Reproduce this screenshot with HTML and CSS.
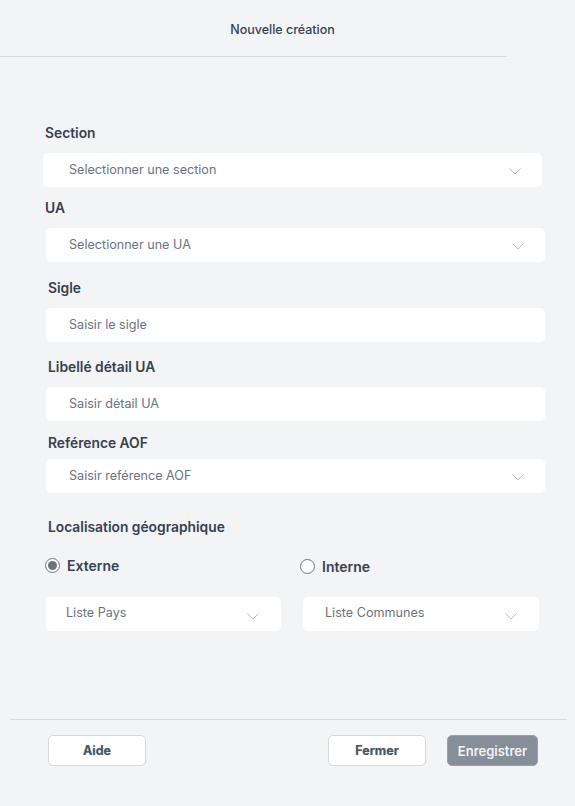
FILE: index.html
```html
<!DOCTYPE html>
<html lang="fr">
<head>
<meta charset="utf-8">
<title>Nouvelle création</title>
<link rel="stylesheet" href="styles.css">
</head>
<body>
<div class="modal">
  <header class="modal-header">
    <h1 class="modal-title">Nouvelle création</h1>
  </header>

  <form class="form">
    <div class="group group-section">
      <label class="label">Section</label>
      <div class="field field-shift">
        <span class="placeholder">Selectionner une section</span>
        <svg class="chevron" viewBox="0 0 12 7" width="12" height="7"><path d="M0.5 0.5 L6 6 L11.5 0.5" fill="none" stroke="#b4bac6" stroke-width="1"/></svg>
      </div>
    </div>

    <div class="group group-ua">
      <label class="label">UA</label>
      <div class="field">
        <span class="placeholder">Selectionner une UA</span>
        <svg class="chevron" viewBox="0 0 12 7" width="12" height="7"><path d="M0.5 0.5 L6 6 L11.5 0.5" fill="none" stroke="#b4bac6" stroke-width="1"/></svg>
      </div>
    </div>

    <div class="group group-sigle">
      <label class="label label-in">Sigle</label>
      <div class="field">
        <span class="placeholder">Saisir le sigle</span>
      </div>
    </div>

    <div class="group group-libelle">
      <label class="label label-in">Libellé détail UA</label>
      <div class="field">
        <span class="placeholder">Saisir détail UA</span>
      </div>
    </div>

    <div class="group group-ref">
      <label class="label label-in">Reférence AOF</label>
      <div class="field">
        <span class="placeholder">Saisir reférence AOF</span>
        <svg class="chevron" viewBox="0 0 12 7" width="12" height="7"><path d="M0.5 0.5 L6 6 L11.5 0.5" fill="none" stroke="#b4bac6" stroke-width="1"/></svg>
      </div>
    </div>

    <div class="group group-loc">
      <label class="label label-in">Localisation géographique</label>
      <div class="radios">
        <div class="radio-item">
          <span class="radio radio-checked"><span class="radio-dot"></span></span>
          <span class="radio-label">Externe</span>
        </div>
        <div class="radio-item radio-item-right">
          <span class="radio"></span>
          <span class="radio-label">Interne</span>
        </div>
      </div>
      <div class="lists">
        <div class="field field-half">
          <span class="placeholder placeholder-list">Liste Pays</span>
          <svg class="chevron chevron-low" viewBox="0 0 12 7" width="12" height="7"><path d="M0.5 0.5 L6 6 L11.5 0.5" fill="none" stroke="#b4bac6" stroke-width="1"/></svg>
        </div>
        <div class="field field-half field-communes">
          <span class="placeholder placeholder-list">Liste Communes</span>
          <svg class="chevron chevron-low" viewBox="0 0 12 7" width="12" height="7"><path d="M0.5 0.5 L6 6 L11.5 0.5" fill="none" stroke="#b4bac6" stroke-width="1"/></svg>
        </div>
      </div>
    </div>
  </form>

  <footer class="modal-footer">
    <button class="btn btn-light" type="button">Aide</button>
    <div class="footer-right">
      <button class="btn btn-light" type="button">Fermer</button>
      <button class="btn btn-primary" type="button">Enregistrer</button>
    </div>
  </footer>
</div>
</body>
</html>
```

FILE: styles.css
```css
* { box-sizing: border-box; }

html, body {
  margin: 0;
  padding: 0;
  background: #f3f4f6;
  font-family: Inter, "Noto Sans", "Liberation Sans", sans-serif;
  color: #374151;
}

.modal {
  width: 575px;
  height: 806px;
  display: flex;
  flex-direction: column;
}

.modal-header {
  width: 507px;
  height: 57px;
  border-bottom: 1px solid #d8dadf;
  display: flex;
  justify-content: center;
  padding-top: 22px;
  padding-left: 58px;
}

.modal-title {
  margin: 0;
  font-size: 12.5px;
  line-height: 16px;
  font-weight: 500;
  color: #374151;
}

.form {
  display: flex;
  flex-direction: column;
  padding-left: 45px;
  padding-right: 30px;
  height: 662px;
}

.group {
  display: flex;
  flex-direction: column;
}

.group-section { margin-top: 66px; }
.group-ua { margin-top: 11px; }
.group-sigle { margin-top: 16px; }
.group-libelle { margin-top: 15px; }
.group-ref { margin-top: 12px; }
.group-loc { margin-top: 24px; }

.label {
  font-size: 13.8px;
  line-height: 20px;
  font-weight: 600;
  color: #374151;
  margin-bottom: 10px;
}

.label-in { padding-left: 3px; }
.group-ref .label { margin-bottom: 6px; }

.field {
  width: 499px;
  height: 34px;
  margin-left: 1px;
  background: #ffffff;
  border-radius: 5px;
  display: flex;
  align-items: center;
  justify-content: space-between;
  padding-left: 23px;
  padding-right: 21px;
}

.field-shift {
  margin-left: -2px;
  padding-left: 26px;
}

.placeholder {
  font-size: 12.6px;
  color: #6b7280;
  line-height: 16px;
}

.chevron {
  display: block;
  flex: none;
  margin-top: 2px;
}

.chevron-low { margin-top: 8px; }

.radios {
  display: flex;
  margin-top: 8px;
  height: 20px;
  align-items: center;
}

.radio-item {
  display: flex;
  align-items: center;
  gap: 7px;
  width: 255px;
}

.radio-item-right {
  margin-top: 3px;
  width: auto;
}

.radio {
  width: 15px;
  height: 15px;
  border: 1px solid #6b7280;
  border-radius: 50%;
  background: #ffffff;
  display: flex;
  align-items: center;
  justify-content: center;
}

.radio-checked {
  border-color: #6b7280;
}

.radio-dot {
  width: 9px;
  height: 9px;
  border-radius: 50%;
  background: #6b7280;
}

.radio-label {
  font-size: 14px;
  font-weight: 600;
  color: #374151;
}

.lists {
  display: flex;
  margin-top: 22px;
  gap: 21px;
}

.field-half {
  width: 235px;
  padding-left: 20px;
  padding-right: 22px;
  align-items: flex-start;
  padding-top: 8px;
}

.field-communes {
  width: 236px;
  padding-left: 22px;
}

.placeholder-list { font-size: 12.6px; }

.modal-footer {
  margin-left: 10px;
  width: 557px;
  border-top: 1px solid #d8dadf;
  display: flex;
  justify-content: space-between;
  padding: 15px 29px 0 38px;
  height: 87px;
}

.footer-right {
  display: flex;
  gap: 21px;
}

.btn {
  height: 31px;
  border-radius: 5px;
  font-family: Inter, "Noto Sans", "Liberation Sans", sans-serif;
  font-size: 12.5px;
  font-weight: 700;
  cursor: pointer;
  text-shadow: 0 0 1px rgba(55, 65, 81, 0.4);
}

.btn-light {
  width: 98px;
  background: #ffffff;
  border: 1px solid #d5d8dd;
  color: #4b5563;
}

.btn-primary {
  width: 91px;
  background: #868e9a;
  border: 1px solid #9aa1ab;
  color: #f3f4f6;
  font-weight: 600;
  font-size: 13px;
  text-shadow: none;
}
```
